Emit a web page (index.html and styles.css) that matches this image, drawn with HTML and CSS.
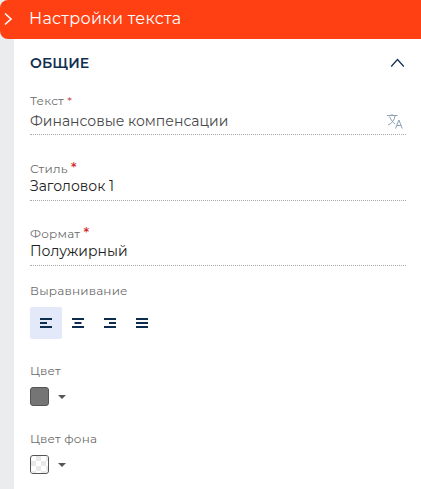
FILE: index.html
```html
<!DOCTYPE html>
<html lang="ru">
<head>
<meta charset="utf-8">
<title>Настройки текста</title>
<link rel="stylesheet" href="styles.css">
</head>
<body>
<header class="header">
  <svg class="header-arrow" width="16" height="39" viewBox="0 0 16 39"><path d="M5 13.5l6 5.5-6 5.5"/></svg>
  <h1 class="title">Настройки текста</h1>
</header>
<main class="panel">
  <div class="section-head">
    <h2 class="section-title">ОБЩИЕ</h2>
    <svg class="collapse" width="16" height="10" viewBox="0 0 16 10"><path d="M1.2 8.5L7.5 1.5l6.3 7"/></svg>
  </div>
  <div class="field field-text">
    <div class="label">Текст <span class="star star-small">*</span></div>
    <div class="value v-text"><span>Финансовые компенсации</span>
      <svg class="translate" width="16" height="16" viewBox="0 0 16 16"><path d="M0 1.5h10.5M5 0v1.5M2.5 2.5C4 6 6 8.5 8 10M8 2C7.5 6 5 9.5 1 11M8.5 14.5l3.4-8.5 3.4 8.5M9.7 11.5h4.4"/></svg>
    </div>
  </div>
  <div class="field">
    <div class="label">Стиль <span class="star">*</span></div>
    <div class="value">Заголовок 1</div>
  </div>
  <div class="field">
    <div class="label">Формат <span class="star">*</span></div>
    <div class="value">Полужирный</div>
  </div>
  <div class="label l-align">Выравнивание</div>
  <div class="aligns">
    <button class="align active" aria-label="По левому краю"><svg width="12" height="10"><path d="M0 1h12M0 5h7M0 9h12"/></svg></button>
    <button class="align" aria-label="По центру"><svg width="12" height="10"><path d="M0 1h12M2.5 5h7M0 9h12"/></svg></button>
    <button class="align" aria-label="По правому краю"><svg width="12" height="10"><path d="M0 1h12M5 5h7M0 9h12"/></svg></button>
    <button class="align" aria-label="По ширине"><svg width="12" height="10"><path d="M0 1h12M0 5h12M0 9h12"/></svg></button>
  </div>
  <div class="label l-color">Цвет</div>
  <div class="picker"><span class="swatch filled"></span><svg class="caret" width="8" height="4"><path d="M0 0h8L4 4z"/></svg></div>
  <div class="label l-back">Цвет фона</div>
  <div class="picker"><span class="swatch"><svg width="17" height="17"><path d="M5 0h5v5H5zM15 0h2v5h-2zM0 5h5v5H0zM10 5h5v5h-5zM5 10h5v5H5zM15 10h2v5h-2zM0 15h5v2H0zM10 15h5v2h-5z"/></svg></span><svg class="caret" width="8" height="4"><path d="M0 0h8L4 4z"/></svg></div>
</main>
</body>
</html>
```
FILE: styles.css
```css
* { box-sizing: border-box; }
body { margin: 0; height: 489px; overflow: hidden; background: #e9eded; font-family: Montserrat, Inter, sans-serif; white-space: nowrap; }
svg { display: block; flex: none; }
path { fill: none; }
.header { height: 39px; display: flex; align-items: center; background: #ff4013; border-radius: 8px 0 0 8px; }
.header-arrow { margin-right: 13px; }
.header-arrow path { stroke: #fff; stroke-width: 1.6; }
.title { margin: -2px 0 0; color: #fff; font-size: 16px; line-height: 36px; font-weight: 400; letter-spacing: .32px; }
.panel { margin-left: 14px; height: 450px; padding: 0 15px 0 16px; background: #fff; }
.section-head { height: 48px; display: flex; align-items: center; justify-content: space-between; }
.section-title { margin: 0; color: #102f50; font-size: 14px; line-height: 20px; font-weight: 600; letter-spacing: .1px; }
.collapse path { stroke: #102f50; stroke-width: 1.2; }
.field { height: 65px; padding-top: 24px; border-bottom: 1px dotted #aaa; }
.field-text { height: 48px; padding-top: 5px; }
.field-text + .field { height: 66px; padding-top: 25px; }
.label { color: #6c6c6c; font-size: 12px; line-height: 18px; font-weight: 400; letter-spacing: .2px; }
.value { color: #222; font-size: 14px; line-height: 18px; font-weight: 400; margin-top: -1px; }
.v-text { display: flex; justify-content: space-between; color: #484848; line-height: 22px; margin-top: 0; }
.translate { margin: 4px 3px 0 0; }
.translate path { stroke: #8fa1b7; stroke-width: 1; }
.star { color: #d51d28; font-size: 14px; font-weight: 500; line-height: 10px; }
.star-small { font-size: 12px; font-weight: 400; color: #bd5350; }
.l-align { margin-top: 16px; }
.aligns { display: flex; margin-top: 7px; }
.align { width: 32px; height: 32px; padding: 0; border: 0; border-radius: 2px; background: none; display: flex; align-items: center; justify-content: center; }
.active { background: #e4e9fa; }
.align path { stroke: #0d2d50; stroke-width: 2; }
.l-color { margin-top: 23px; }
.picker { display: flex; align-items: center; gap: 9px; margin-top: 7px; }
.swatch { width: 19px; height: 19px; border: 1px solid #555; border-radius: 3px; overflow: hidden; }
.filled { background: #757575; }
.swatch path { fill: #e9e9e9; }
.caret path { fill: #555; }
.l-back { margin-top: 24px; }
```
